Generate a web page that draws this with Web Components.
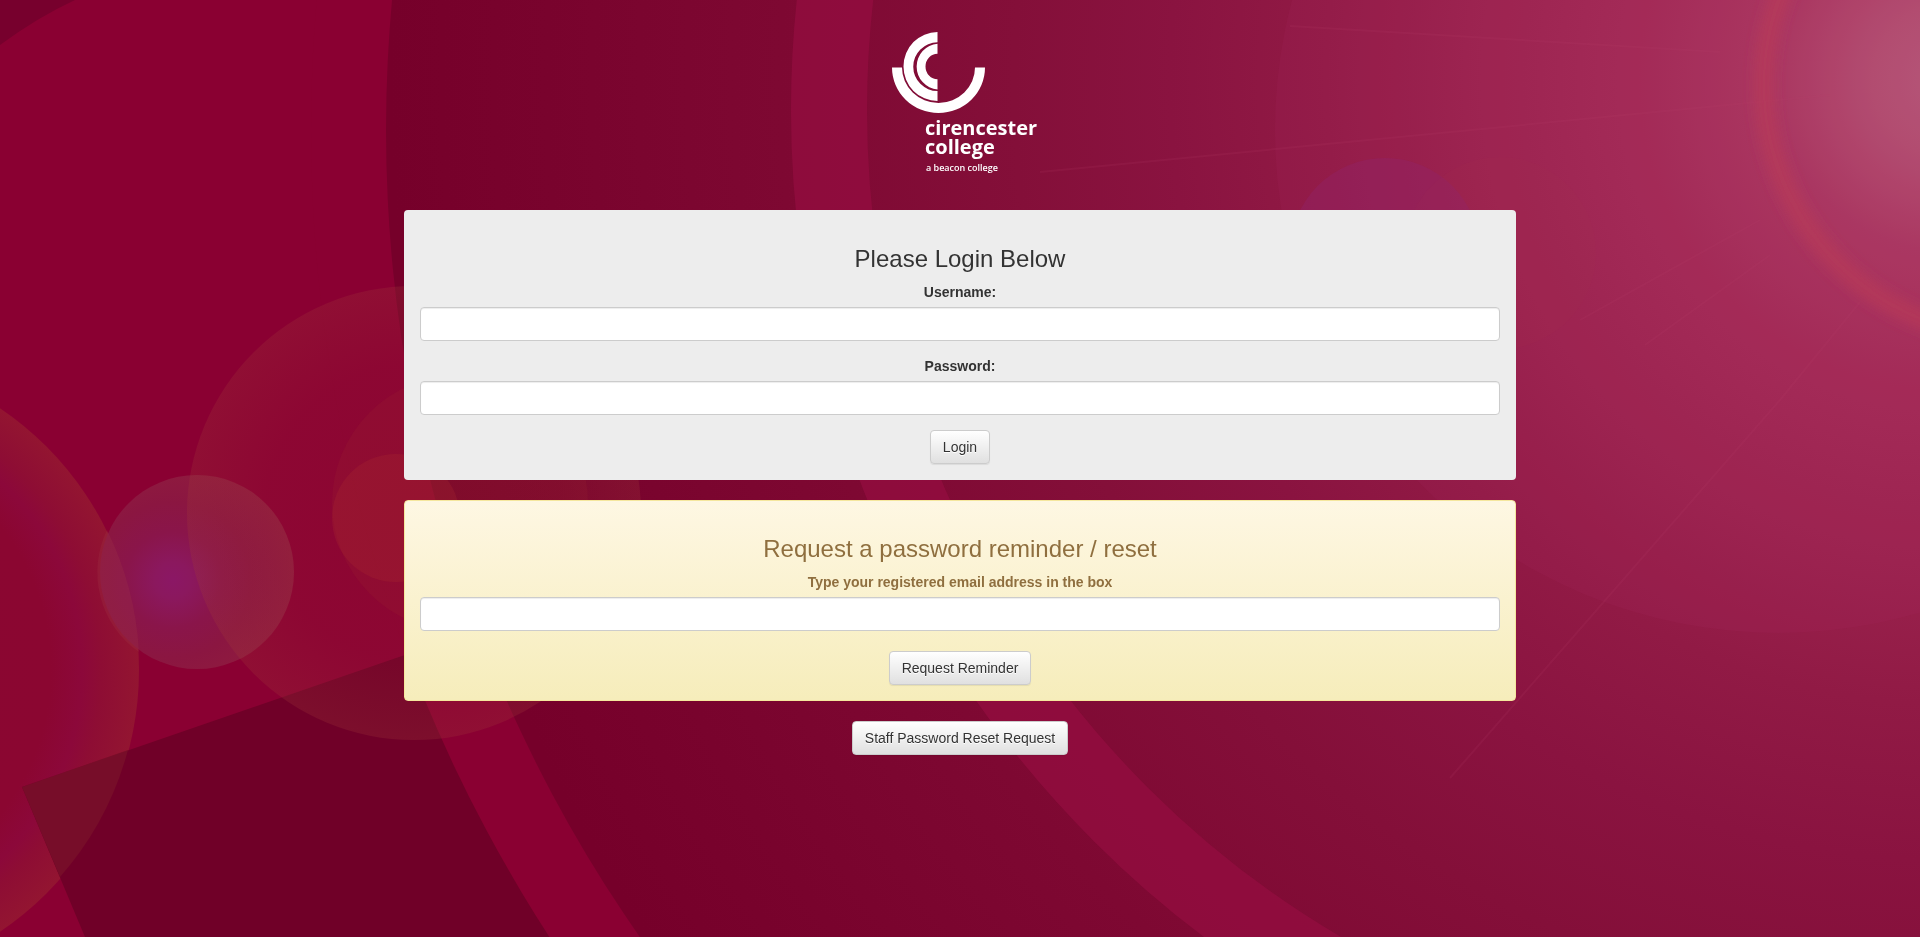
<!DOCTYPE html>
<html lang="en">
<head>
<meta charset="utf-8">
<meta name="viewport" content="width=device-width, initial-scale=1">
<title>Cirencester College Login</title>
<style>
body{margin:0;min-height:100vh;background:#800832;color:#333;font:14px/20px Arial,"Liberation Sans",sans-serif}
</style>
</head>
<body>
<login-page></login-page>
<script>
const define=(name,html,setup)=>customElements.define(name,class extends HTMLElement{
  constructor(){super();this.attachShadow({mode:"open"}).innerHTML=html;}
  connectedCallback(){if(setup)setup(this,this.shadowRoot);}
});

define("college-backdrop",`
<style>
:host{display:block;position:fixed;inset:0;z-index:-1;overflow:hidden}
svg{display:block;width:100%;height:100%}
</style>
<svg viewBox="0 0 1920 937" preserveAspectRatio="xMidYMid slice" aria-hidden="true">
<defs>
<radialGradient id="sun" gradientUnits="userSpaceOnUse" cx="1950" cy="80" r="1560">
<stop offset="0" stop-color="#b75e7c"/><stop offset=".05" stop-color="#b45273"/><stop offset=".11" stop-color="#ab3a62"/><stop offset=".2" stop-color="#a32b56"/><stop offset=".3" stop-color="#9b234e"/><stop offset=".4" stop-color="#911a45"/><stop offset=".5" stop-color="#8a1340"/><stop offset=".6" stop-color="#840f39"/><stop offset=".75" stop-color="#7e0832"/><stop offset=".9" stop-color="#79032d"/><stop offset="1" stop-color="#76002a"/>
</radialGradient>
<radialGradient id="violet" gradientUnits="userSpaceOnUse" cx="173" cy="580" r="120">
<stop offset="0" stop-color="#8b1765"/><stop offset=".15" stop-color="#8b185e"/><stop offset=".4" stop-color="#8a154a"/><stop offset=".65" stop-color="#8b1641"/><stop offset="1" stop-color="#901c3e"/>
</radialGradient>
<radialGradient id="edge"><stop offset="0" stop-color="#8a0631"/><stop offset=".72" stop-color="#8b0631"/><stop offset=".82" stop-color="#8c083a"/><stop offset=".88" stop-color="#8e0d34"/><stop offset="1" stop-color="#931531"/></radialGradient>
<radialGradient id="halo"><stop offset="0" stop-color="#a03030" stop-opacity=".1"/><stop offset=".65" stop-color="#a03038" stop-opacity=".14"/><stop offset="1" stop-color="#a03838" stop-opacity=".26"/></radialGradient>
<filter id="soft"><feGaussianBlur stdDeviation="6"/></filter>
</defs>
<rect width="1920" height="937" fill="#8a0032"/>
<path d="M0 45Q38 17 75 0H0z" fill="#77002d"/>
<circle cx="-177" cy="670" r="316" fill="url(#edge)"/>
<path d="M22 787L680 560V937H85z" fill="#700028"/>
<path d="M22 787L128 750A316 316 0 0 1 60 877z" fill="#7a1129" opacity=".75"/>
<circle cx="1796" cy="130" r="1485" fill="#8a0032"/>
<circle cx="1796" cy="130" r="1410" fill="url(#sun)"/>
<circle cx="1825" cy="110" r="996" fill="none" stroke="#960e42" stroke-opacity=".65" stroke-width="76"/>
<circle cx="1778" cy="130" r="503" fill="#ad2860" fill-opacity=".14"/>
<circle cx="1385" cy="253" r="95" fill="#92246a" fill-opacity=".4"/>
<circle cx="1500" cy="253" r="96" fill="#b04058" fill-opacity=".05"/>
<g stroke="#b84068" stroke-opacity=".14" stroke-width="2" fill="none">
<path d="M1040 172L1830 95M1290 26L1720 52M1860 302L1780 400L1450 778M1760 220L1580 320M1770 255L1645 345"/>
</g>
<circle cx="2017" cy="85" r="253" fill="none" stroke="#b83c58" stroke-width="20" stroke-opacity=".65" filter="url(#soft)"/>
<circle cx="197" cy="572" r="97" fill="url(#violet)"/>
<path d="M107 530A316 316 0 0 1 139 652A97 97 0 0 1 107 530z" fill="#a03848" fill-opacity=".25"/>
<circle cx="414" cy="513" r="227" fill="url(#halo)"/>
<circle cx="460" cy="503" r="128" fill="#a03030" fill-opacity=".15"/>
<circle cx="396" cy="518" r="64" fill="#a82c30" fill-opacity=".28"/>
</svg>`);

define("college-logo",`
<style>
:host{display:block;width:170px;height:170px}
svg{display:block;width:100%;height:100%}
text{fill:#fff;font-family:"Open Sans","Noto Sans",sans-serif;font-weight:700}
.name{font-size:20px}
.tag{font-size:9px;font-weight:600}
</style>
<svg viewBox="0 0 170 170" role="img" aria-label="Cirencester College, a beacon college">
<g fill="#fff">
<path d="M62.500 12A34 34.500 0 0 0 62.500 81V71A24.200 24.300 0 0 1 62.500 22.300z"/>
<path d="M62.500 23.700A23 23 0 0 0 62.500 69.500V59.300A12 12.800 0 0 1 62.500 33.700z"/>
<path d="M17 47.500A46.500 45.500 0 0 0 110 47.500H100A36.700 35.500 0 0 1 63.500 83A36.700 35.500 0 0 1 27 47.500z"/>
</g>
<text class="name"><tspan x="50" y="115">cirencester</tspan><tspan x="50" y="134">college</tspan></text>
<text class="tag" x="51" y="151">a beacon college</text>
</svg>`);

define("form-panel",`
<style>
:host{display:block;box-sizing:border-box;padding:29px 16px 16px;border-radius:4px;background:#ededed;text-align:center}
:host([tone="notice"]){padding:28px 15px 15px;border:1px solid #f5e79e;background:linear-gradient(#fef7e3,#f6edbb);color:#8f6f3f}
h2{margin:0 0 3px;font-size:24px;line-height:40px;font-weight:400}
</style>
<h2></h2><slot></slot>`,(el,root)=>{root.querySelector("h2").textContent=el.getAttribute("heading");});

define("text-field",`
<style>
:host{display:block;margin-bottom:15px}
label{display:block;margin-bottom:5px;font-weight:700}
input{display:block;box-sizing:border-box;width:100%;height:34px;padding:6px 12px;border:1px solid #ccc;border-radius:4px;background:#fff;color:#555;font:inherit;box-shadow:inset 0 1px 1px rgba(0,0,0,.075)}
</style>
<label for="box"></label><input id="box">`,(el,root)=>{
  root.querySelector("label").textContent=el.getAttribute("label");
  root.querySelector("input").type=el.getAttribute("type")||"text";
});

define("push-button",`
<style>
:host{display:inline-block;vertical-align:top}
button{display:block;height:34px;padding:6px 12px;border:1px solid #ccc;border-radius:4px;background:linear-gradient(#fff,#e0e0e0);color:#333;font:inherit;text-shadow:0 1px 0 #fff;box-shadow:inset 0 1px 0 rgba(255,255,255,.15),0 1px 1px rgba(0,0,0,.075);cursor:pointer}
</style>
<button type="button"><slot></slot></button>`);

define("login-page",`
<style>
:host{display:block}
main{display:flex;flex-direction:column;align-items:center;gap:20px;box-sizing:border-box;max-width:1152px;margin:0 auto;padding:20px}
form-panel{width:100%}
.reminder{margin-bottom:20px}
</style>
<college-backdrop></college-backdrop>
<main>
<college-logo></college-logo>
<form-panel heading="Please Login Below">
<text-field label="Username:"></text-field>
<text-field label="Password:" type="password"></text-field>
<push-button>Login</push-button>
</form-panel>
<form-panel tone="notice" heading="Request a password reminder / reset">
<text-field class="reminder" label="Type your registered email address in the box" type="email"></text-field>
<push-button>Request Reminder</push-button>
</form-panel>
<push-button>Staff Password Reset Request</push-button>
</main>`);
</script>
</body>
</html>
